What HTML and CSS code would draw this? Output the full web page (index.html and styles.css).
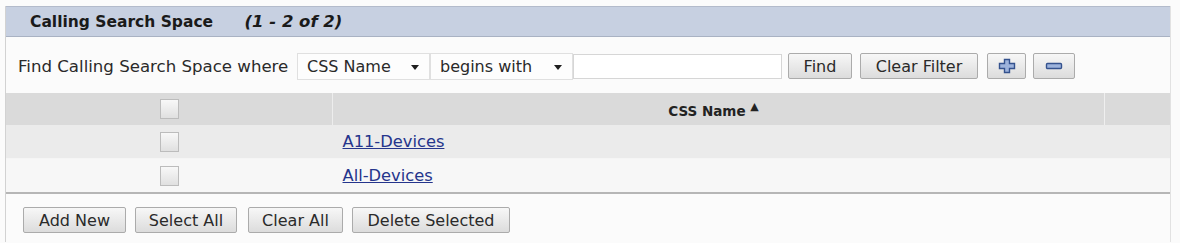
FILE: index.html
```html
<!DOCTYPE html>
<html lang="en">
<head>
  <meta charset="UTF-8" />
  <title>Find and List Calling Search Spaces</title>
  <link rel="stylesheet" href="styles.css">
</head>
<body>
<div class="panel">
  <div class="panel-title">
    <span class="title">Calling Search Space</span>
    <span class="count">(1 - 2 of 2)</span>
  </div>

  <div class="search-row">
    <span class="search-label">Find Calling Search Space where</span>
    <div class="dropdown field-select">CSS Name <span class="caret"></span></div>
    <div class="dropdown op-select">begins with <span class="caret"></span></div>
    <input type="text" class="search-input">
    <button class="btn btn-find">Find</button>
    <button class="btn btn-clear">Clear Filter</button>
    <button class="btn btn-icon btn-plus" title="Add search criteria">
      <svg width="18" height="16" viewBox="0 0 18 16">
        <path d="M6.5 1.5h5v4h5v5h-5v4h-5v-4h-5v-5h5z" fill="#9db3dc" stroke="#34528e" stroke-width="1.4"/>
      </svg>
    </button>
    <button class="btn btn-icon btn-minus" title="Remove search criteria">
      <svg width="18" height="16" viewBox="0 0 18 16">
        <rect x="1.5" y="5.5" width="15" height="5" rx="1" fill="#9db3dc" stroke="#34528e" stroke-width="1.4"/>
      </svg>
    </button>
  </div>

  <table class="results">
    <thead>
      <tr>
        <th class="col-check"><span class="checkbox"></span></th>
        <th class="col-name">CSS Name <span class="sort">&#9650;</span></th>
        <th class="col-extra"></th>
      </tr>
    </thead>
    <tbody>
      <tr class="odd">
        <td class="col-check"><span class="checkbox"></span></td>
        <td colspan="2"><a href="#">A11-Devices</a></td>
      </tr>
      <tr class="even">
        <td class="col-check"><span class="checkbox"></span></td>
        <td colspan="2"><a href="#">All-Devices</a></td>
      </tr>
    </tbody>
  </table>

  <div class="actions">
    <button class="btn btn-add">Add New</button>
    <button class="btn btn-select">Select All</button>
    <button class="btn btn-clearall">Clear All</button>
    <button class="btn btn-delete">Delete Selected</button>
  </div>
</div>
</body>
</html>
```

FILE: styles.css
```css
body {
  margin: 0;
  padding: 6px 9px 0 5px;
  background-color: #fbfbfb;
  font-family: "DejaVu Sans", Verdana, sans-serif;
  font-size: 16px;
  color: #222;
}
.panel {
  border-left: 1px solid #d2d2d2;
  border-right: 1px solid #e2e2e2;
}
.panel-title {
  height: 29px;
  line-height: 29px;
  background-color: #c7d0e1;
  border-top: 1px solid #b3bbcb;
  border-bottom: 1px solid #a9b2c3;
  padding-left: 24px;
  font-size: 15.5px;
  font-weight: bold;
  color: #1a1a1a;
}
.panel-title .count {
  font-style: italic;
  font-size: 16.5px;
  margin-left: 26px;
}
.search-row {
  display: flex;
  align-items: center;
  height: 28px;
  margin: 15px 0 13px 0;
  padding-left: 12px;
}
.search-label {
  width: 279px;
  flex-shrink: 0;
  font-size: 16.6px;
  color: #2a2a2a;
  white-space: nowrap;
}
.dropdown {
  box-sizing: border-box;
  height: 27px;
  line-height: 25px;
  background: #fdfdfd;
  border: 1px solid #e0e0e0;
  padding-left: 9px;
  position: relative;
  color: #2a2a2a;
}
.field-select { width: 133px; }
.op-select { width: 143px; }
.caret {
  position: absolute;
  right: 10px;
  top: 11px;
  border-left: 4px solid transparent;
  border-right: 4px solid transparent;
  border-top: 5px solid #1e1e1e;
}
.search-input {
  box-sizing: border-box;
  width: 209px;
  height: 25px;
  border: 1px solid #d6d6d6;
  background: #fff;
  margin: 0;
  padding: 0;
}
.btn {
  box-sizing: border-box;
  font-family: "DejaVu Sans", Verdana, sans-serif;
  font-size: 16px;
  color: #2a2a2a;
  height: 26px;
  border: 1px solid #ababab;
  border-radius: 2px;
  background: linear-gradient(#f7f7f7, #dcdcdc);
  padding: 0;
  cursor: pointer;
}
.btn-find { margin-left: 6px; width: 64px; }
.btn-clear { margin-left: 8px; width: 118px; }
.btn-icon {
  display: flex;
  align-items: center;
  justify-content: center;
}
.btn-plus { margin-left: 9px; width: 39px; }
.btn-minus { margin-left: 7px; width: 42px; }
.results {
  width: 100%;
  border-collapse: collapse;
  border-bottom: 2px solid #b6b6b6;
}
.results th {
  height: 32px;
  padding: 0;
  background-color: #dadada;
  font-size: 13.5px;
  font-weight: bold;
  color: #222;
}
.results .col-check {
  width: 326px;
  text-align: center;
}
.results th.col-check { border-right: 1px solid #ededed; }
.results th.col-name { border-right: 1px solid #efefef; padding-right: 10px; }
.results .col-extra { width: 65px; }
.sort {
  font-size: 11px;
  vertical-align: 6px;
}
.results td {
  height: 33px;
  padding: 0;
}
.results td a {
  margin-left: 10px;
  font-size: 16.3px;
  color: #25358c;
}
.results tr.odd td {
  background-color: #ebebeb;
  border-bottom: 1px solid #f5f5f5;
}
.results tr.even td { background-color: #f7f7f7; }
.checkbox {
  display: inline-block;
  box-sizing: border-box;
  width: 19px;
  height: 20px;
  border: 1px solid #bcbcbc;
  background: linear-gradient(#f8f8f8, #e0e0e0);
  vertical-align: middle;
}
.actions {
  display: flex;
  padding: 13px 0 9px 17px;
}
.btn-add { width: 103px; }
.btn-select { width: 102px; margin-left: 9px; }
.btn-clearall { width: 95px; margin-left: 11px; }
.btn-delete { width: 158px; margin-left: 9px; }
```
